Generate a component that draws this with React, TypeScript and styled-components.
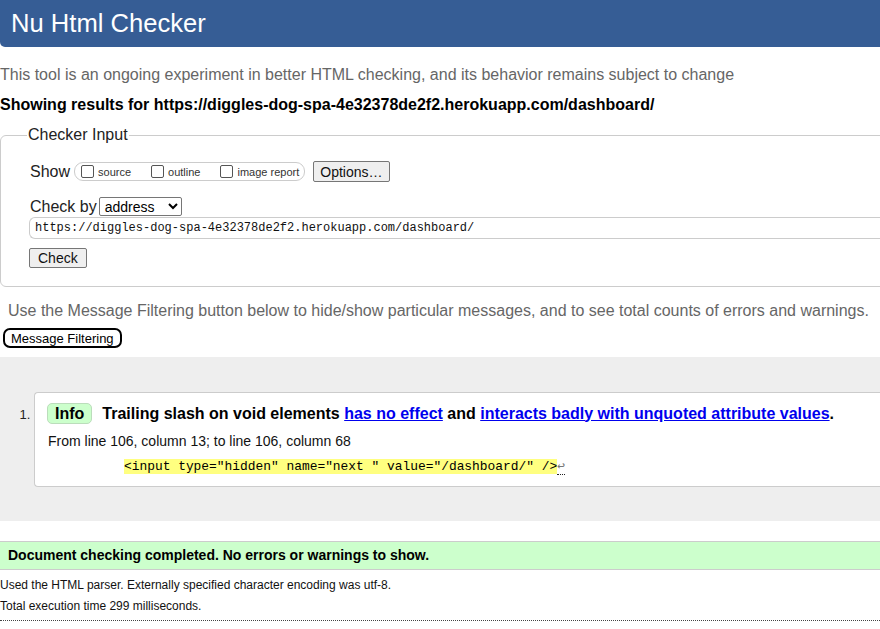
import React from "react";
import styled, { createGlobalStyle } from "styled-components";

const GlobalStyle = createGlobalStyle`
  html, body {
    margin: 0;
    padding: 0;
    overflow: hidden;
    background: #fff;
  }
  body {
    font-family: "Liberation Sans", Arial, sans-serif;
    font-size: 16px;
    color: #000;
  }
`;

const Page = styled.div`
  width: 960px;
`;

const Header = styled.h1`
  margin: 0;
  height: 47px;
  padding-left: 11px;
  background: #365d95;
  color: #fff;
  font-weight: normal;
  font-size: 25.6px;
  line-height: 46px;
  border-radius: 0 0 0 5px;
`;

const Intro = styled.p`
  margin: 19px 0 0;
  line-height: 18px;
  color: #666;
`;

const Showing = styled.p`
  margin: 12px 0 0;
  line-height: 18px;
  font-weight: bold;
`;

const Fieldset = styled.fieldset`
  margin: 12px 0 0;
  padding: 0 0 18px 29px;
  border: 1px solid #ccc;
  border-radius: 6px;
  min-width: 0;
`;

const Legend = styled.legend`
  margin-left: -3px;
  padding: 0 1px;
  line-height: 18px;
  color: #222;
`;

const Row = styled.div<{ $top: number }>`
  display: flex;
  align-items: center;
  margin-top: ${(p) => p.$top}px;
  color: #222;
`;

const RowLabel = styled.span`
  margin-right: 4px;
  line-height: 18px;
`;

const OptionGroup = styled.span`
  display: flex;
  align-items: center;
  height: 17px;
  padding: 0 5px 0 6px;
  border: 1px solid #ccc;
  border-radius: 9px;
`;

const Option = styled.label<{ $gap: number }>`
  display: flex;
  align-items: center;
  margin-right: ${(p) => p.$gap}px;
  font-size: 11px;
  color: #333;
`;

const Box = styled.span`
  width: 11px;
  height: 11px;
  margin-right: 4px;
  border: 1px solid #555;
  border-radius: 2px;
  background: #fff;
`;

const Button = styled.button`
  height: 21px;
  padding: 0 6px;
  font-family: "Liberation Sans", Arial, sans-serif;
  font-size: 14px;
  color: #111;
  background: #efefef;
  border: 1px solid #767676;
  border-radius: 2px;
`;

const OptionsButton = styled(Button)`
  margin-left: 8px;
`;

const Select = styled.div`
  display: flex;
  align-items: center;
  justify-content: space-between;
  width: 73px;
  height: 17px;
  margin-left: -1px;
  padding: 0 3px 0 5px;
  border: 1px solid #767676;
  border-radius: 2px;
  font-size: 14px;
  color: #000;
`;

const UrlInput = styled.div`
  margin-top: 1px;
  margin-left: -1px;
  height: 20px;
  padding-left: 5px;
  border: 1px solid #ccc;
  border-right: none;
  border-radius: 6px 0 0 6px;
  font-family: "Liberation Mono", monospace;
  font-size: 12px;
  line-height: 20px;
  color: #111;
`;

const CheckButton = styled(Button)`
  display: block;
  margin: 9px 0 0 -1px;
  height: 20px;
  padding: 0 8px;
`;

const Hint = styled.p`
  margin: 15px 0 0 8px;
  line-height: 18px;
  color: #666;
`;

const FilterButton = styled.button`
  display: block;
  margin: 8px 0 0 3px;
  height: 20px;
  padding: 0 6px;
  font-family: "Liberation Sans", Arial, sans-serif;
  font-size: 13px;
  color: #000;
  background: #fff;
  border: 2px solid #000;
  border-radius: 7px;
`;

const Results = styled.ol`
  margin: 9px 0 0;
  padding: 35px 0 34px 34px;
  background: #eee;
  font-size: 14px;
`;

const Message = styled.li`
  padding: 10px 0 12px 12px;
  background: #fff;
  border: 1px solid #ccc;
  border-right: none;
  border-radius: 4px 0 0 4px;
  &::marker {
    color: #222;
    font-size: 13px;
  }
`;

const Title = styled.div`
  display: flex;
  align-items: center;
  font-size: 16px;
  font-weight: bold;
`;

const Badge = styled.span`
  margin-right: 10px;
  height: 19px;
  padding: 0 7px;
  line-height: 19px;
  background: #ccffcc;
  border: 1px solid #bbddbb;
  border-radius: 5px;
`;

const TitleText = styled.span`
  white-space: pre;
`;

const Link = styled.a`
  color: #0000ee;
  text-decoration: underline;
`;

const Location = styled.p`
  margin: 9px 0 0 1px;
  line-height: 16px;
  color: #111;
`;

const Extract = styled.p`
  margin: 10px 0 0 77px;
  font-family: "Liberation Mono", monospace;
  font-size: 12.9px;
  line-height: 15px;
  white-space: pre;
`;

const Highlight = styled.span`
  background: #ffff80;
`;

const Newline = styled.span`
  color: #777;
  border-bottom: 1px dotted #222;
`;

const Success = styled.p`
  margin: 20px 0 0;
  height: 27px;
  padding-left: 8px;
  line-height: 27px;
  background: #ccffcc;
  border-top: 1px solid #ccc;
  border-bottom: 1px solid #ccc;
  font-size: 14px;
  font-weight: bold;
`;

const Stats = styled.p`
  margin: 7px 0 0;
  font-size: 12px;
  line-height: 16px;
  color: #111;
  & + & {
    margin-top: 5px;
  }
`;

const Rule = styled.hr`
  margin: 6px 0 0;
  border: none;
  border-top: 1px dotted #444;
`;

const url = "https://diggles-dog-spa-4e32378de2f2.herokuapp.com/dashboard/";

export default function App() {
  return (
    <Page>
      <GlobalStyle />
      <Header>Nu Html Checker</Header>
      <Intro>
        This tool is an ongoing experiment in better HTML checking, and its behavior remains
        subject to change
      </Intro>
      <Showing>Showing results for {url}</Showing>

      <Fieldset>
        <Legend>Checker Input</Legend>
        <Row $top={17}>
          <RowLabel>Show</RowLabel>
          <OptionGroup>
            <Option $gap={20}>
              <Box />
              source
            </Option>
            <Option $gap={20}>
              <Box />
              outline
            </Option>
            <Option $gap={0}>
              <Box />
              image report
            </Option>
          </OptionGroup>
          <OptionsButton>Options…</OptionsButton>
        </Row>
        <Row $top={15}>
          <RowLabel style={{ marginRight: 3 }}>Check by</RowLabel>
          <Select>
            address
            <svg width="10" height="7" viewBox="0 0 10 7">
              <path d="M1 1l4 4 4-4" fill="none" stroke="#000" strokeWidth="2" />
            </svg>
          </Select>
        </Row>
        <UrlInput>{url}</UrlInput>
        <CheckButton>Check</CheckButton>
      </Fieldset>

      <Hint>
        Use the Message Filtering button below to hide/show particular messages, and to see total
        counts of errors and warnings.
      </Hint>
      <FilterButton>Message Filtering</FilterButton>

      <Results>
        <Message>
          <Title>
            <Badge>Info</Badge>
            <TitleText>
              Trailing slash on void elements <Link>has no effect</Link> and{" "}
              <Link>interacts badly with unquoted attribute values</Link>.
            </TitleText>
          </Title>
          <Location>From line 106, column 13; to line 106, column 68</Location>
          <Extract>
            <Highlight>{'<input type="hidden" name="next " value="/dashboard/" />'}</Highlight>
            <Newline>↩</Newline>
          </Extract>
        </Message>
      </Results>

      <Success>Document checking completed. No errors or warnings to show.</Success>
      <Stats>Used the HTML parser. Externally specified character encoding was utf-8.</Stats>
      <Stats>Total execution time 299 milliseconds.</Stats>
      <Rule />
    </Page>
  );
}
